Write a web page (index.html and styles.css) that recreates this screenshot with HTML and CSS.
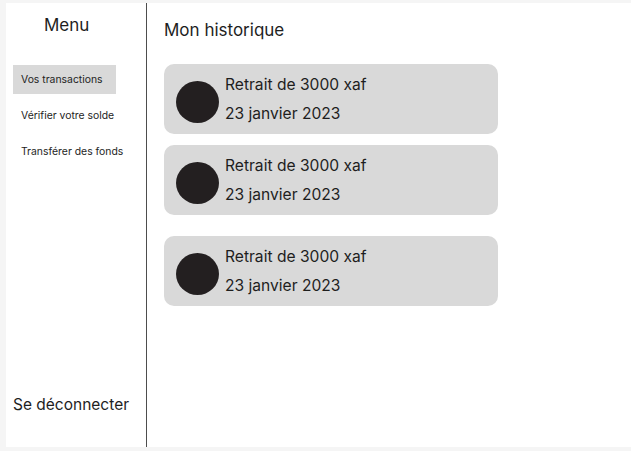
FILE: index.html
```html
<!DOCTYPE html>
<html lang="fr">
<head>
<meta charset="utf-8">
<title>Mon historique</title>
<link rel="stylesheet" href="styles.css">
</head>
<body>
<div class="frame">
  <div class="panel">
    <aside class="sidebar">
      <div class="menu-title">Menu</div>
      <nav class="nav">
        <a class="nav-item active">Vos transactions</a>
        <a class="nav-item">Vérifier votre solde</a>
        <a class="nav-item">Transférer des fonds</a>
      </nav>
      <div class="logout">Se déconnecter</div>
    </aside>
    <main class="main">
      <h1 class="title">Mon historique</h1>
      <div class="cards">
        <div class="card">
          <div class="avatar"></div>
          <div class="card-text">
            <div class="line">Retrait de 3000 xaf</div>
            <div class="line">23 janvier 2023</div>
          </div>
        </div>
        <div class="card">
          <div class="avatar"></div>
          <div class="card-text">
            <div class="line">Retrait de 3000 xaf</div>
            <div class="line">23 janvier 2023</div>
          </div>
        </div>
        <div class="card card-spaced">
          <div class="avatar"></div>
          <div class="card-text">
            <div class="line">Retrait de 3000 xaf</div>
            <div class="line">23 janvier 2023</div>
          </div>
        </div>
      </div>
    </main>
  </div>
</div>
</body>
</html>
```
FILE: styles.css
```css
* { box-sizing: border-box; }
html, body { margin: 0; padding: 0; }
body {
  background: #f5f5f5;
  font-family: Inter, "Noto Sans", sans-serif;
  color: #1e1e1e;
  width: 631px;
  height: 451px;
  overflow: hidden;
}
.frame {
  padding: 3px 0 4px 6px;
  height: 451px;
}
.panel {
  background: #ffffff;
  height: 444px;
  display: flex;
}
.sidebar {
  width: 141px;
  border-right: 1px solid #4d4d4d;
  display: flex;
  flex-direction: column;
  padding-top: 12px;
  padding-bottom: 33px;
}
.menu-title {
  font-size: 17px;
  line-height: 20px;
  padding-left: 38px;
}
.nav {
  margin-top: 30px;
  display: flex;
  flex-direction: column;
  gap: 7px;
  padding-left: 7px;
}
.nav-item {
  display: block;
  width: 103px;
  height: 29px;
  line-height: 29px;
  padding-left: 8px;
  font-size: 10.4px;
  white-space: nowrap;
}
.nav-item.active { background: #d9d9d9; }
.logout {
  margin-top: auto;
  padding-left: 7px;
  font-size: 15.5px;
  line-height: 19px;
}
.main {
  flex: 1;
  padding: 17px 0 0 17px;
}
.title {
  margin: 0 0 24px;
  font-size: 17px;
  font-weight: 400;
  line-height: 20px;
}
.cards {
  display: flex;
  flex-direction: column;
  gap: 11px;
}
.card {
  width: 334px;
  height: 70px;
  background: #d9d9d9;
  border-radius: 10px;
  display: flex;
  align-items: flex-start;
  padding: 6px 0 0 12px;
}
.card-spaced { margin-top: 10px; }
.avatar {
  width: 43px;
  height: 42px;
  border-radius: 50%;
  background: #231f20;
  margin-top: 11px;
  flex: none;
}
.card-text {
  margin-left: 6px;
}
.line {
  font-size: 15.6px;
  line-height: 29px;
  white-space: nowrap;
}
```
